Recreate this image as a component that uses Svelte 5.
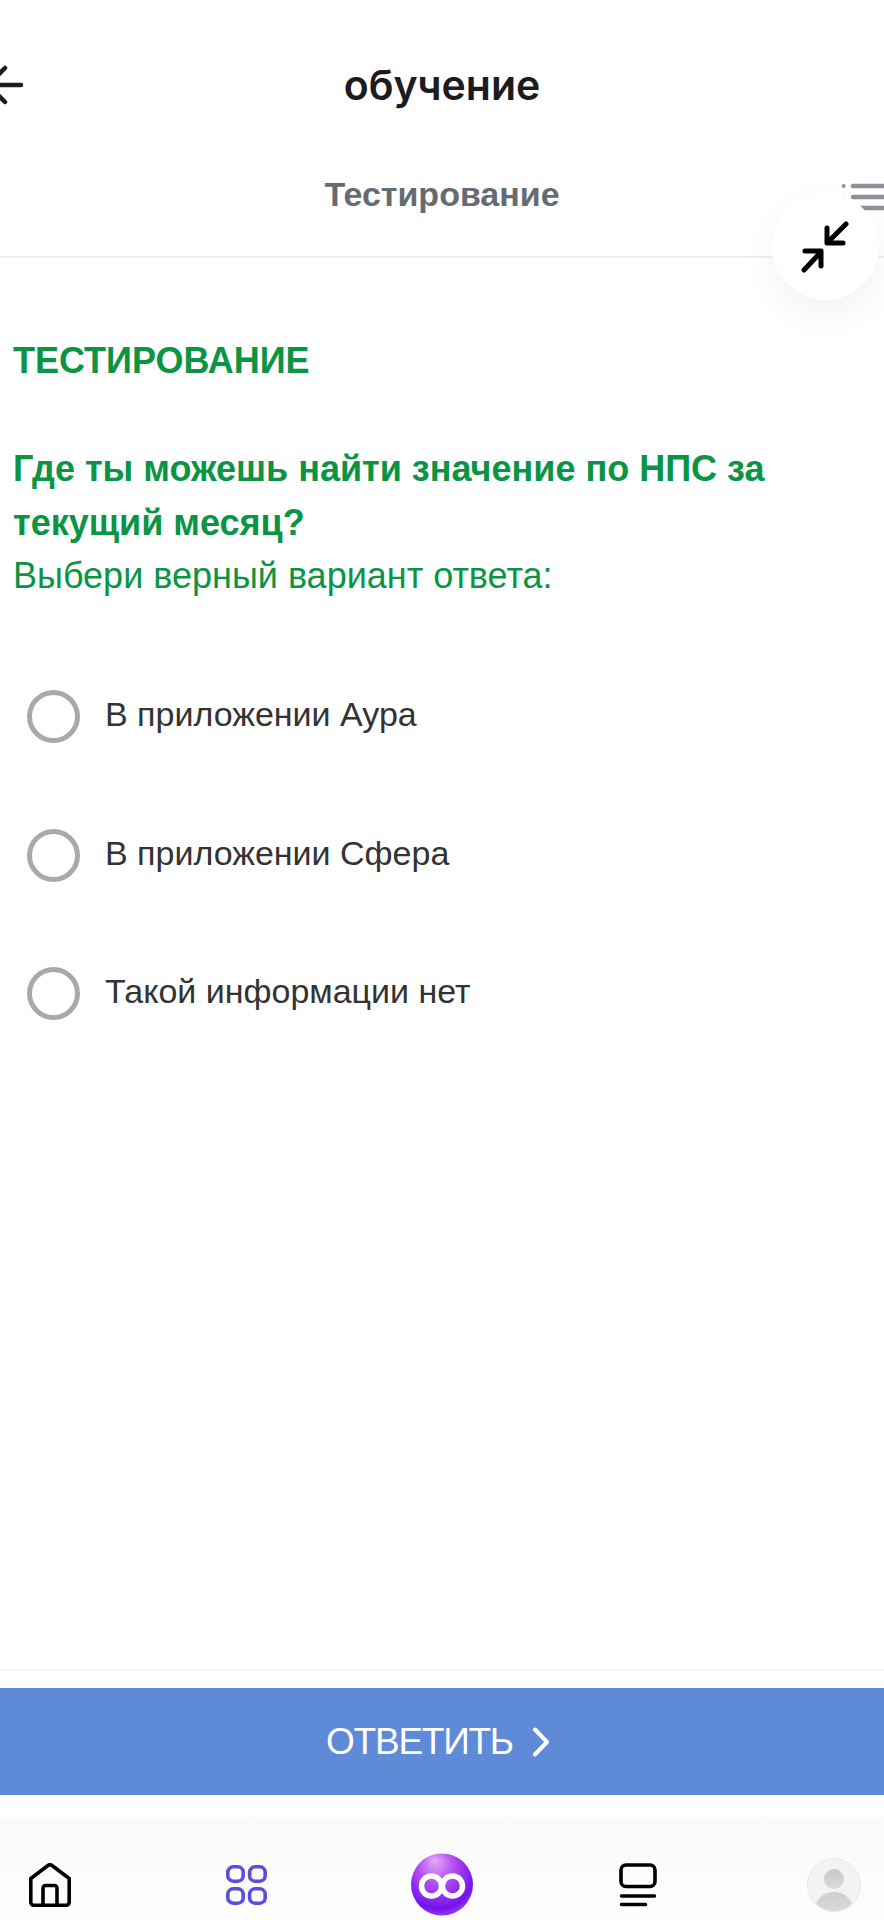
<script>
  const options = ['В приложении Аура', 'В приложении Сфера', 'Такой информации нет']
</script>

<div class="page">
  <header>
    <div class="topbar">
      <svg class="back" width="24" height="40" viewBox="0 0 24 40" fill="none" stroke="#1c1c1e" stroke-width="4.5" stroke-linecap="round">
        <path d="M0 20h21M5 3-12 20 5 37"/>
      </svg>
      <h1>обучение</h1>
    </div>
    <div class="tabs">
      <span class="tab">Тестирование</span>
      <svg class="menu" width="41" height="30" viewBox="0 0 41 30" fill="none" stroke="#8e9199" stroke-width="4.5" stroke-linecap="round">
        <path d="M10 4h32M10 15h32M10 26h32"/>
        <circle cx="0.700" cy="4" r="2" fill="#8e9199" stroke="none"/>
        <circle cx="0.700" cy="15" r="1" fill="#8e9199" stroke="none"/>
      </svg>
    </div>
  </header>

  <button class="collapse" aria-label="Свернуть">
    <svg width="52" height="52" viewBox="0 0 52 52" fill="none" stroke="#000" stroke-width="5" stroke-linecap="round" stroke-linejoin="round">
      <path d="M46 3 28 21M27 7v15h16"/>
      <path d="M4 49 21 31M5 30h16v15"/>
    </svg>
  </button>

  <main>
    <h2>ТЕСТИРОВАНИЕ</h2>
    <p class="question"><b>Где ты можешь найти значение по НПС за текущий месяц?</b><br>Выбери верный вариант ответа:</p>
    <ul>
      {#each options as option}
        <li><span class="radio"></span><span class="label">{option}</span></li>
      {/each}
    </ul>
  </main>

  <footer>
    <div class="action">
      <button class="submit">ОТВЕТИТЬ
        <svg width="18" height="30" viewBox="0 0 18 30" fill="none" stroke="#fff" stroke-width="4" stroke-linecap="round" stroke-linejoin="round">
          <path d="M3 2.500 15 15 3 27.500"/>
        </svg>
      </button>
    </div>
    <nav>
      <svg width="42" height="44" viewBox="0 0 42 44" fill="none" stroke="#000" stroke-width="3.600" stroke-linejoin="round">
        <path d="M1.800 15.500 19 2.500a3.200 3.200 0 0 1 4 0L40.200 15.500V39a3 3 0 0 1-3 3.200H4.800a3 3 0 0 1-3-3.200z"/>
        <path d="M14 42V25a2.500 2.500 0 0 1 2.500-2.500h9A2.500 2.500 0 0 1 28 25v17"/>
      </svg>
      <svg width="41" height="40" viewBox="0 0 41 40" fill="none" stroke="#5a4fdc" stroke-width="3.600">
        <rect x="1.800" y="1.800" width="15.400" height="14.400" rx="5.500"/>
        <rect x="23.600" y="1.800" width="15.600" height="14.400" rx="5.500"/>
        <rect x="1.800" y="23.800" width="15.400" height="14.400" rx="5.500"/>
        <rect x="23.600" y="23.800" width="15.600" height="14.400" rx="5.500"/>
      </svg>
      <svg width="62" height="63" viewBox="0 0 62 63" fill="none">
        <defs>
          <radialGradient id="ball" cx="0.45" cy="0.35" r="0.68" fx="0.38" fy="0.1">
            <stop offset="0" stop-color="#e6aaf8"/>
            <stop offset="0.4" stop-color="#b552f1"/>
            <stop offset="0.85" stop-color="#7514ea"/>
            <stop offset="1" stop-color="#9a3df0"/>
          </radialGradient>
        </defs>
        <circle cx="31" cy="31.500" r="31" fill="url(#ball)"/>
        <circle cx="20.500" cy="33" r="10" stroke="#fff" stroke-width="5.500"/>
        <circle cx="41.500" cy="33" r="10" stroke="#fff" stroke-width="5.500"/>
      </svg>
      <svg width="38" height="44" viewBox="0 0 38 44" fill="none" stroke="#000" stroke-width="3.600" stroke-linecap="round">
        <rect x="2" y="2" width="34" height="21.500" rx="5"/>
        <path d="M2.500 33h33M2.500 41.500h24"/>
      </svg>
      <div class="avatar"><span class="head"></span><span class="body"></span></div>
    </nav>
  </footer>
</div>

<style>
  :global(body) {
    margin: 0;
    background: #fff;
  }
  .page {
    position: relative;
    display: flex;
    flex-direction: column;
    height: 1920px;
    overflow: hidden;
    font-family: "Liberation Sans", Arial, sans-serif;
  }
  header {
    padding: 55px 0 22px;
    border-bottom: 2px solid #f0f0f0;
  }
  .topbar {
    position: relative;
    display: flex;
    justify-content: center;
    align-items: center;
    height: 60px;
    margin-bottom: 40px;
  }
  .back {
    position: absolute;
    left: 0;
    top: 10px;
    overflow: visible;
  }
  h1 {
    margin: 0;
    font-family: Inter, sans-serif;
    font-size: 41px;
    font-weight: 600;
    color: #1c1c1e;
  }
  .tabs {
    position: relative;
    display: flex;
    justify-content: center;
    align-items: center;
    height: 79px;
  }
  .tab {
    font-size: 34px;
    font-weight: 700;
    color: #666b73;
  }
  .menu {
    position: absolute;
    right: 0;
    top: 27px;
    overflow: visible;
  }
  .collapse {
    position: absolute;
    left: 772px;
    top: 193px;
    display: flex;
    align-items: center;
    justify-content: center;
    width: 107px;
    height: 107px;
    padding: 0;
    border: 0;
    border-radius: 50%;
    background: #fff;
    box-shadow: 0 14px 36px rgba(0, 0, 0, 0.05);
  }
  main {
    flex: 1;
    padding: 76px 14px 0 13px;
  }
  h2 {
    margin: 0 0 55px;
    font-size: 36px;
    line-height: 53px;
    font-weight: 700;
    color: #0a9444;
  }
  .question {
    margin: 0;
    font-size: 36px;
    line-height: 53.500px;
    color: #0a9444;
  }
  ul {
    display: flex;
    flex-direction: column;
    gap: 85.500px;
    margin: 87.500px 0 0;
    padding: 0 0 0 14px;
    list-style: none;
  }
  li {
    display: flex;
    align-items: center;
    gap: 25px;
    height: 53px;
    font-size: 34px;
    color: #333;
  }
  .label {
    margin-bottom: 4px;
  }
  .radio {
    box-sizing: border-box;
    width: 53px;
    height: 53px;
    border: 5px solid #a9a9a9;
    border-radius: 50%;
  }
  footer {
    border-top: 2px solid #f3f3f3;
    padding-top: 17px;
  }
  .action {
    padding-bottom: 22px;
  }
  .submit {
    display: flex;
    align-items: center;
    justify-content: center;
    gap: 19px;
    width: 100%;
    height: 107px;
    padding: 0 8px 0 0;
    border: 0;
    background: #5f8ad7;
    color: #fff;
    font-family: "Liberation Sans", Arial, sans-serif;
    font-size: 37px;
    letter-spacing: -1.250px;
  }
  nav {
    display: grid;
    grid-template-columns: repeat(5, 196px);
    justify-content: center;
    justify-items: center;
    align-items: center;
    height: 103px;
    box-sizing: border-box;
    padding: 36px 0 5px;
    background: linear-gradient(#f9f9f9, #fefefe);
  }
  .avatar {
    position: relative;
    width: 54px;
    height: 54px;
    box-sizing: border-box;
    border: 1px solid #e8e8eb;
    border-radius: 50%;
    background: #f3f3f5;
    overflow: hidden;
  }
  .head {
    position: absolute;
    left: 16px;
    top: 10px;
    width: 20px;
    height: 20px;
    border-radius: 50%;
    background: linear-gradient(#c9c9cc, #dadadc);
  }
  .body {
    position: absolute;
    left: 7px;
    top: 33px;
    width: 38px;
    height: 34px;
    border-radius: 50%;
    background: linear-gradient(#cfcfd2, #e2e2e4);
  }
</style>
